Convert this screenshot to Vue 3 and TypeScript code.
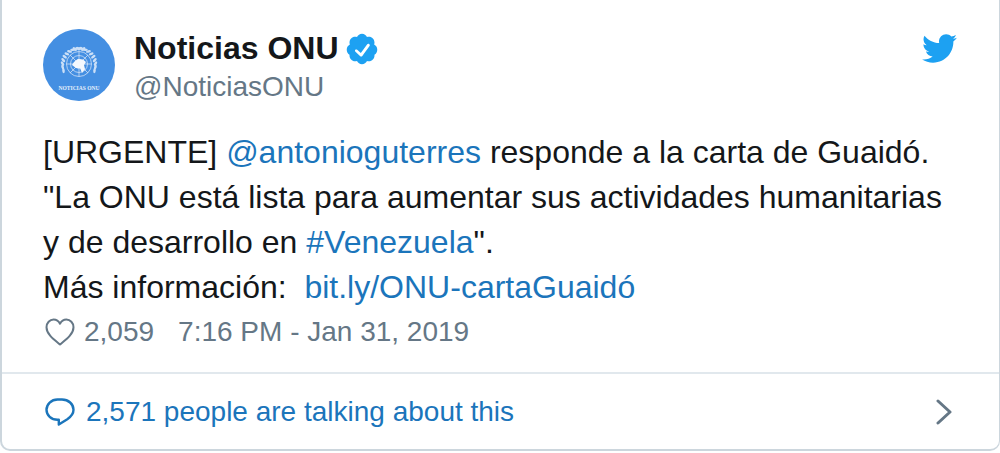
<script setup lang="ts">
interface Leaf {
  key: string;
  transform: string;
}

const leaves: Leaf[] = [];
for (let i = 0; i < 11; i++) {
  const deg = 200 - i * 12.5;
  const rad = (deg * Math.PI) / 180;
  const dx = Math.cos(rad) * 16.5;
  const dy = -Math.sin(rad) * 16.5;
  const tilt = 200 - deg + 5;
  leaves.push({ key: `l${i}`, transform: `translate(${(36 + dx).toFixed(2)} ${(36 + dy).toFixed(2)}) rotate(${(-tilt).toFixed(1)})` });
  leaves.push({ key: `r${i}`, transform: `translate(${(36 - dx).toFixed(2)} ${(36 + dy).toFixed(2)}) rotate(${tilt.toFixed(1)})` });
}
</script>

<template>
  <div class="card">
    <div class="main">
      <header class="head">
        <div class="avatar">
          <svg viewBox="0 0 72 72" width="72" height="72" aria-hidden="true">
            <circle cx="36" cy="36" r="36" fill="#448fe2" />
            <g fill="none" stroke="#cfe1f7" stroke-width="0.8">
              <circle cx="36" cy="35" r="12.500" />
              <circle cx="36" cy="35" r="8.500" />
              <circle cx="36" cy="35" r="4.500" />
              <path d="M36 22.500v25M23.500 35h25M27 26l18 18M45 26L27 44" />
            </g>
            <path d="M31 33l4-3 5 .5 3 2.500-2 3 1 4-3 4-2-5h-4l-4-3z" fill="#f4f8fd" />
            <g fill="#e3eefb" opacity="0.85">
              <ellipse v-for="leaf in leaves" :key="leaf.key" cx="0" cy="0" rx="1.300" ry="2.500" :transform="leaf.transform" />
            </g>
            <text x="36" y="61" text-anchor="middle" class="avatar-label">NOTICIAS ONU</text>
          </svg>
        </div>
        <div class="names">
          <div class="name-row">
            <span class="name">Noticias ONU</span>
            <svg class="badge" viewBox="1 1 22 22" width="32" height="32" aria-hidden="true">
              <path fill="#1da1f2" d="M22.5 12.5c0-1.58-.875-2.95-2.148-3.6.154-.435.238-.905.238-1.4 0-2.21-1.71-3.998-3.818-3.998-.47 0-.92.084-1.336.25C14.818 2.415 13.51 1.5 12 1.5s-2.816.917-3.437 2.25c-.415-.165-.866-.25-1.336-.25-2.11 0-3.818 1.79-3.818 4 0 .494.083.964.237 1.4-1.272.65-2.147 2.018-2.147 3.6 0 1.495.782 2.798 1.942 3.486-.02.17-.032.34-.032.514 0 2.21 1.708 4 3.818 4 .47 0 .92-.086 1.335-.25.62 1.334 1.926 2.25 3.437 2.25 1.512 0 2.818-.916 3.437-2.25.415.163.865.248 1.336.248 2.11 0 3.818-1.79 3.818-4 0-.174-.012-.344-.033-.513 1.158-.687 1.943-1.99 1.943-3.484z" />
              <path fill="#fff" d="M16.9 8.6c-.4-.3-1-.2-1.3.2l-4.4 6-2.5-2.3c-.4-.3-1-.3-1.3.1-.3.4-.3 1 .1 1.3l3.3 3c.2.2.4.3.6.3h.1c.3 0 .5-.2.7-.4l5-6.9c.3-.4.2-1-.3-1.3z" />
            </svg>
          </div>
          <div class="handle">@NoticiasONU</div>
        </div>
        <svg class="bird" viewBox="0 2 24 20" width="35" height="29" aria-hidden="true">
          <path fill="#1da1f2" d="M23.954 4.569c-.885.389-1.83.654-2.825.775 1.014-.611 1.794-1.574 2.163-2.723-.951.555-2.005.959-3.127 1.184-.896-.959-2.173-1.559-3.591-1.559-2.717 0-4.92 2.203-4.92 4.917 0 .39.045.765.127 1.124C7.691 8.094 4.066 6.13 1.64 3.161c-.427.722-.666 1.561-.666 2.475 0 1.71.87 3.213 2.188 4.096-.807-.026-1.566-.248-2.228-.616v.061c0 2.385 1.693 4.374 3.946 4.827-.413.111-.849.171-1.296.171-.314 0-.615-.03-.916-.086.631 1.953 2.445 3.377 4.604 3.417-1.68 1.319-3.809 2.105-6.102 2.105-.39 0-.779-.023-1.17-.067 2.189 1.394 4.768 2.209 7.557 2.209 9.054 0 13.999-7.496 13.999-13.986 0-.209 0-.42-.015-.63.961-.689 1.8-1.56 2.46-2.548z" />
        </svg>
      </header>

      <p class="tweet">[URGENTE] <a class="link">@antonioguterres</a> responde a la carta de Guaidó.<br />"La ONU está lista para aumentar sus actividades humanitarias<br />y de desarrollo en <a class="link">#Venezuela</a>".<br />Más información:&nbsp; <a class="link">bit.ly/ONU-cartaGuaidó</a></p>

      <div class="meta">
        <svg class="heart" viewBox="0 0 30 28" width="30" height="28" aria-hidden="true">
          <path fill="none" stroke="#657786" stroke-width="2" stroke-linejoin="round" d="M15 26.500C9.500 22 1.500 16.500 1.500 9.200 1.500 4.800 4.800 1.500 8.600 1.500c2.900 0 5.100 1.600 6.400 4.200 1.300-2.600 3.500-4.200 6.400-4.200 3.800 0 7.100 3.300 7.100 7.700 0 7.300-8 12.800-13.500 17.300z" />
        </svg>
        <span class="count">2,059</span>
        <span class="time">7:16 PM - Jan 31, 2019</span>
      </div>
    </div>

    <footer class="foot">
      <svg class="bubble" viewBox="0 0 30 30" width="30" height="30" aria-hidden="true">
        <path fill="none" stroke="#1b75bb" stroke-width="2.400" stroke-linejoin="round" d="M12.500 2.500h4.500c6.400 0 11.500 4.600 11.500 10.300 0 4.200-2.600 7-6.200 9.400l-8.500 5.300v-4.800h-1.300C6.300 22.700 1.500 18.200 1.500 12.800 1.500 7.100 6.300 2.500 12.500 2.500z" />
      </svg>
      <span class="talk">2,571 people are talking about this</span>
      <svg class="chev" viewBox="0 0 16 26" width="16" height="26" aria-hidden="true">
        <path fill="none" stroke="#657786" stroke-width="3" stroke-linecap="round" stroke-linejoin="round" d="M2 2l12 11L2 24" />
      </svg>
    </footer>
  </div>
</template>

<style>
html, body { margin: 0; background: #fff; }
</style>

<style scoped>
.card {
  box-sizing: border-box;
  width: 1000px;
  height: 451px;
  display: flex;
  flex-direction: column;
  background: #fff;
  border-style: solid;
  border-color: #ccd6dd;
  border-width: 0 1px 2px 2px;
  border-radius: 0 0 10px 10px;
  font-family: "Liberation Sans", Arial, sans-serif;
}
.main { flex: 1; padding: 29px 42px 0 41px; }
.head { display: flex; align-items: flex-start; }
.avatar { width: 72px; height: 72px; flex: none; }
.avatar svg { display: block; }
.avatar-label { font: 700 5.5px "Liberation Serif", serif; fill: #e6f0fb; }
.names { margin-left: 19px; flex: 1; }
.name-row { display: flex; align-items: center; gap: 8px; height: 39px; }
.name { font-size: 32px; font-weight: 700; color: #14171a; line-height: 39px; }
.badge { flex: none; }
.handle { font-size: 28px; line-height: 37px; color: #657786; }
.bird { flex: none; margin-top: 5px; }
.tweet { margin: 25px 0 0; font-size: 32px; line-height: 45px; color: #14171a; }
.link { color: #1b75bb; text-decoration: none; }
.meta { display: flex; align-items: center; margin-top: 2px; height: 40px; font-size: 28px; color: #657786; }
.heart { flex: none; margin-right: 9px; margin-left: 2px; }
.time { margin-left: 24px; }
.foot {
  display: flex;
  align-items: center;
  height: 77px;
  padding: 0 47px 0 43px;
  border-top: 2px solid #e1e8ed;
  box-sizing: border-box;
}
.bubble { flex: none; margin-right: 11px; }
.talk { flex: 1; font-size: 28px; color: #1b75bb; }
.chev { flex: none; }
</style>
